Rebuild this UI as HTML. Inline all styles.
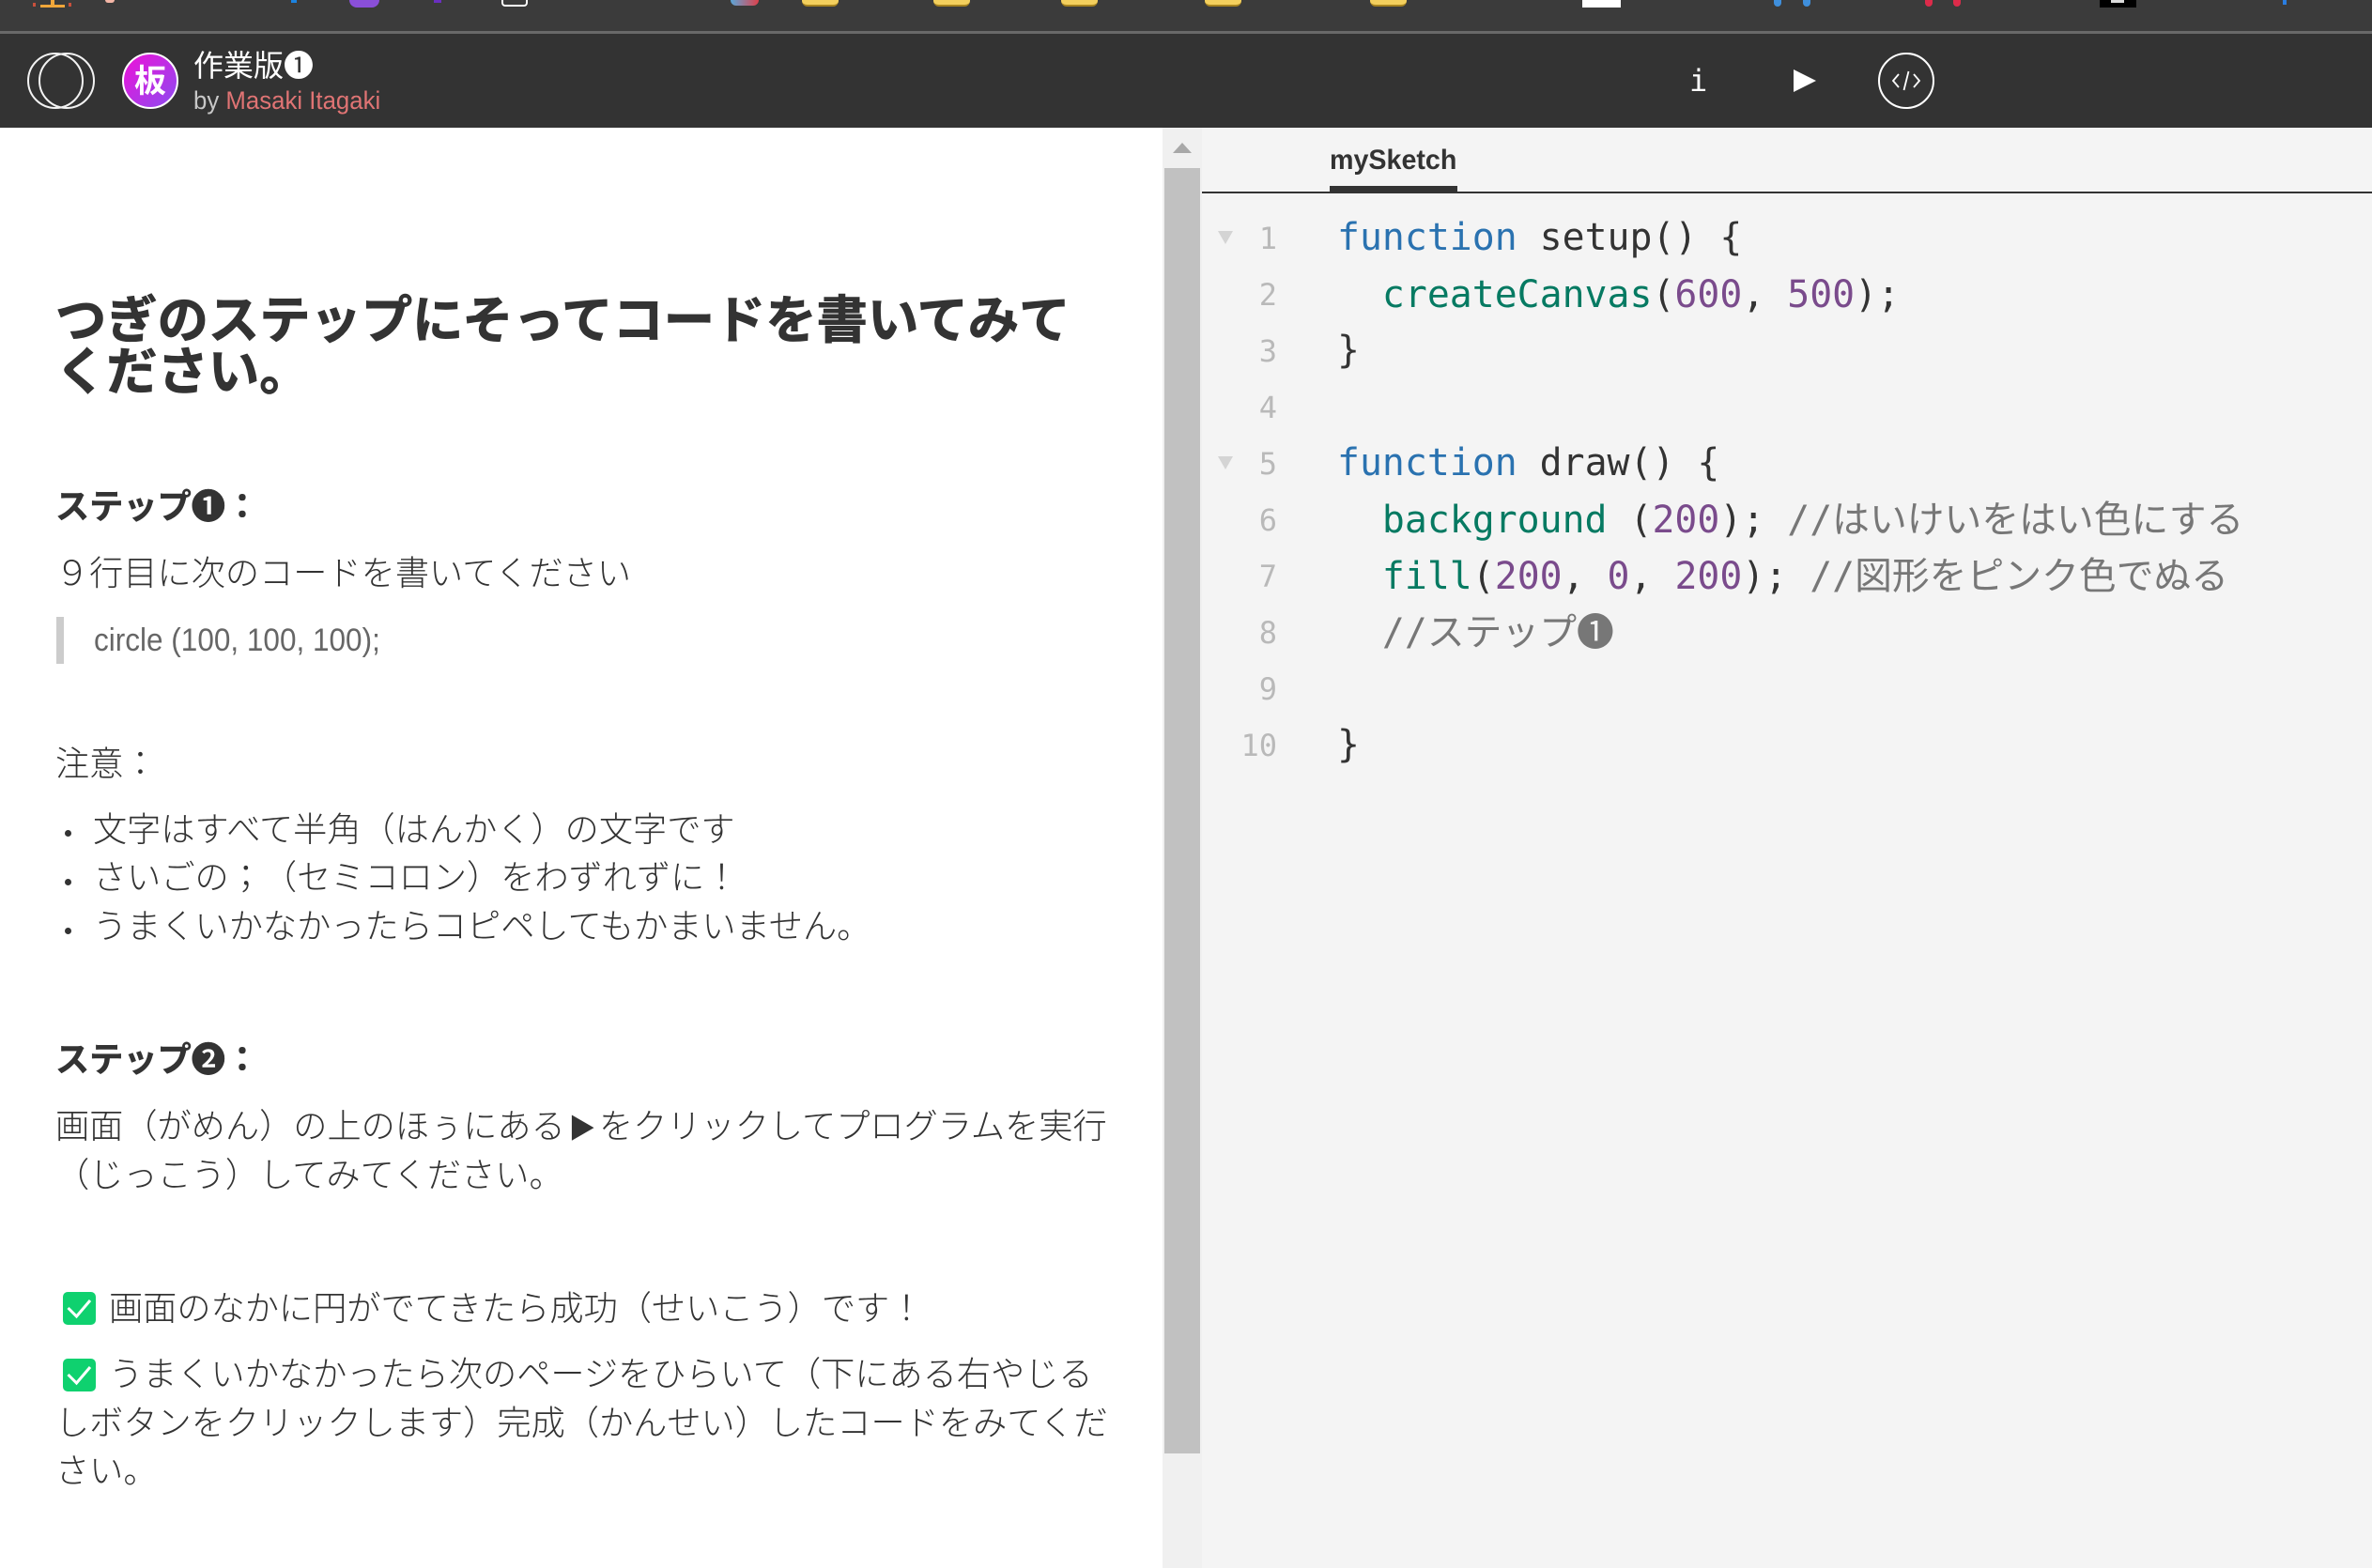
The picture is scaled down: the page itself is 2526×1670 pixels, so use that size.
<!DOCTYPE html>
<html lang="ja"><head><meta charset="utf-8"><title>作業版1</title>
<style>
html,body{margin:0;padding:0;width:2526px;height:1670px;overflow:hidden;background:#fff}
body{position:relative;font-family:"Liberation Sans","Noto Sans CJK JP",sans-serif;color:#333}
.a{position:absolute}
.t{position:absolute;white-space:nowrap;font-size:36.2px;line-height:52px;height:52px;font-family:"Noto Sans CJK JP","Liberation Sans",sans-serif;font-weight:300;left:59px;color:#333;text-spacing-trim:space-all}
.b{font-weight:700;-webkit-text-stroke:.5px #333}
.c{position:absolute;white-space:pre;font-family:"DejaVu Sans Mono","Noto Sans CJK JP",monospace;font-size:39.8px;line-height:60px;height:60px;left:1424px;color:#333}
.n{position:absolute;font-family:"DejaVu Sans Mono",monospace;font-size:32px;line-height:60px;height:60px;left:1260px;width:100px;text-align:right;color:#b9b9b9}
.k{color:#2a72b0}.f{color:#067a62}.d{color:#7a4b8c}.m{color:#777;font-family:"DejaVu Sans Mono","Noto Sans CJK JP",monospace}
.dot{position:absolute;left:69px;width:7px;height:7px;border-radius:50%;background:#333}
</style></head><body>
<div class="a" style="left:0;top:0;width:2526px;height:33px;background:#3b3b3b"></div>
<div class="a" style="left:0;top:33px;width:2526px;height:3px;background:#696969"></div>
<div class="a" style="left:0;top:36px;width:2526px;height:100px;background:#333"></div>

<!-- cut-off toolbar icons -->
<div class="a" style="left:35px;top:3px;width:3px;height:4px;background:#c8503c"></div>
<div class="a" style="left:73px;top:3px;width:3px;height:4px;background:#c8503c"></div>
<div class="a" style="left:43px;top:5px;width:26px;height:3px;background:#f0a63a"></div>
<div class="a" style="left:54px;top:0;width:4px;height:6px;background:#f0a63a"></div>
<div class="a" style="left:112px;top:0;width:10px;height:3px;background:#f4b6a6;border-radius:0 0 5px 5px"></div>
<div class="a" style="left:310px;top:0;width:6px;height:3px;background:#1c83e0"></div>
<div class="a" style="left:372px;top:0;width:32px;height:8px;background:#8a4fd8;border-radius:0 0 16px 16px"></div>
<div class="a" style="left:462px;top:0;width:8px;height:3px;background:#6a2fc0"></div>
<div class="a" style="left:534px;top:0;width:24px;height:5px;border:2px solid #fff;border-top:0;border-radius:0 0 4px 4px"></div>
<div class="a" style="left:778px;top:0;width:30px;height:6px;background:linear-gradient(90deg,#5aa6d8,#e0404a);border-radius:0 0 15px 15px"></div>
<div class="a" style="left:854px;top:0;width:39px;height:7px;background:#f3cf5d;border-bottom:2px solid #a88420;box-sizing:border-box;border-radius:0 0 6px 6px"></div>
<div class="a" style="left:994px;top:0;width:39px;height:7px;background:#f3cf5d;border-bottom:2px solid #a88420;box-sizing:border-box;border-radius:0 0 6px 6px"></div>
<div class="a" style="left:1130px;top:0;width:39px;height:7px;background:#f3cf5d;border-bottom:2px solid #a88420;box-sizing:border-box;border-radius:0 0 6px 6px"></div>
<div class="a" style="left:1283px;top:0;width:39px;height:7px;background:#f3cf5d;border-bottom:2px solid #a88420;box-sizing:border-box;border-radius:0 0 6px 6px"></div>
<div class="a" style="left:1459px;top:0;width:39px;height:7px;background:#f3cf5d;border-bottom:2px solid #a88420;box-sizing:border-box;border-radius:0 0 6px 6px"></div>
<div class="a" style="left:1685px;top:0;width:41px;height:8px;background:#fff"></div>
<div class="a" style="left:1889px;top:0;width:8px;height:7px;background:#3f8fdc;border-radius:0 0 4px 4px"></div>
<div class="a" style="left:1920px;top:0;width:8px;height:7px;background:#3f8fdc;border-radius:0 0 4px 4px"></div>
<div class="a" style="left:2050px;top:0;width:8px;height:7px;background:#dc2b4a;border-radius:0 0 4px 4px"></div>
<div class="a" style="left:2080px;top:0;width:8px;height:7px;background:#dc2b4a;border-radius:0 0 4px 4px"></div>
<div class="a" style="left:2236px;top:0;width:39px;height:8px;background:#000"></div>
<div class="a" style="left:2248px;top:0;width:14px;height:3px;background:#ddd"></div>
<div class="a" style="left:2431px;top:0;width:4px;height:5px;background:#2a7de0"></div>

<!-- header -->
<svg class="a" style="left:26px;top:54px" width="78" height="64" viewBox="0 0 78 64" fill="none" stroke="#f2f2f2" stroke-width="2">
<circle cx="33" cy="32" r="29"/><circle cx="45" cy="32" r="29"/></svg>
<svg class="a" style="left:130px;top:56px" width="60" height="60" viewBox="0 0 60 60">
<defs><linearGradient id="g" x1="0" y1="0" x2="1" y2="1"><stop offset="0" stop-color="#f010d8"/><stop offset="1" stop-color="#8a4cf0"/></linearGradient></defs>
<circle cx="30" cy="30" r="29" fill="url(#g)" stroke="#fff" stroke-width="2"/>
<text x="30" y="42" text-anchor="middle" font-size="34" font-weight="700" fill="#fff" font-family="Noto Sans CJK JP,sans-serif">板</text></svg>
<div class="t" style="left:206px;top:44px;font-size:32px;line-height:48px;height:48px;color:#fff;font-weight:400">作業版❶</div>
<div class="t" style="left:206px;top:85px;font-size:27px;line-height:44px;height:44px;font-family:'Liberation Sans',sans-serif;font-weight:400;color:#c8c8c8;transform:scaleX(.955);transform-origin:0 0">by <span style="color:#e07474">Masaki Itagaki</span></div>

<div class="t" style="left:1799px;top:64px;color:#fff;font-family:'DejaVu Sans Mono',monospace;font-size:32px;line-height:44px;height:44px;font-weight:400">i</div>
<svg class="a" style="left:1908px;top:72px" width="28" height="28"><path d="M2 2 L26 14 L2 26Z" fill="#fff"/></svg>
<svg class="a" style="left:1998px;top:54px" width="64" height="64" viewBox="0 0 64 64" fill="none" stroke="#fff">
<circle cx="32" cy="32" r="29" stroke-width="2"/>
<path d="M24 25 L18 32 L24 39M40 25 L46 32 L40 39M34.500 22 L29.500 42" stroke-width="1.800"/></svg>

<!-- left pane -->
<div class="t b" style="top:310px;font-size:54.3px;line-height:54px;height:54px;font-weight:700;-webkit-text-stroke:.9px #333">つぎのステップにそってコードを書いてみて</div>
<div class="t b" style="top:365px;font-size:54.3px;line-height:54px;height:54px;font-weight:700;-webkit-text-stroke:.9px #333">ください。</div>
<div class="t b" style="top:511px">ステップ❶：</div>
<div class="t" style="top:582px">９行目に次のコードを書いてください</div>
<div class="a" style="left:60px;top:657px;width:8px;height:50px;background:#ccc"></div>
<div class="t" style="left:100px;top:656px;font-size:34px;color:#666;font-family:'Liberation Sans',sans-serif;font-weight:400;transform:scaleX(.927);transform-origin:0 0">circle (100, 100, 100);</div>
<div class="t" style="top:785px">注意：</div>
<div class="dot" style="top:884px"></div>
<div class="t" style="left:99px;top:855px">文字はすべて半角（はんかく）の文字です</div>
<div class="dot" style="top:936px"></div>
<div class="t" style="left:99px;top:906px">さいごの；（セミコロン）をわずれずに！</div>
<div class="dot" style="top:988px"></div>
<div class="t" style="left:99px;top:958px">うまくいかなかったらコピペしてもかまいません。</div>
<div class="t b" style="top:1100px">ステップ❷：</div>
<div class="t" style="top:1171px">画面（がめん）の上のほぅにある<span style="display:inline-block;width:36.2px;font-size:29px;text-align:center">▶</span>をクリックしてプログラムを実行</div>
<div class="t" style="top:1223px">（じっこう）してみてください。</div>

<svg class="a" style="left:67px;top:1376px" width="35" height="35" viewBox="0 0 35 35"><rect width="35" height="35" rx="5" fill="#0fd16f"/><path d="M5.500 17 L14.500 26 L29 9" fill="none" stroke="#fff" stroke-width="3"/></svg>
<div class="t" style="left:116px;top:1365px">画面のなかに円がでてきたら成功（せいこう）です！</div>
<svg class="a" style="left:67px;top:1447px" width="35" height="35" viewBox="0 0 35 35"><rect width="35" height="35" rx="5" fill="#0fd16f"/><path d="M5.500 17 L14.500 26 L29 9" fill="none" stroke="#fff" stroke-width="3"/></svg>
<div class="t" style="left:116px;top:1435px">うまくいかなかったら次のページをひらいて（下にある右やじる</div>
<div class="t" style="top:1487px">しボタンをクリックします）完成（かんせい）したコードをみてくだ</div>
<div class="t" style="top:1538px">さい。</div>

<!-- scrollbar -->
<div class="a" style="left:1238px;top:136px;width:42px;height:1534px;background:#f0f0f0"></div>
<div class="a" style="left:1240px;top:179px;width:38px;height:1369px;background:#c1c1c1"></div>
<svg class="a" style="left:1249px;top:152px" width="20" height="12"><path d="M10 0 L20 11 L0 11Z" fill="#a8a8a8"/></svg>

<!-- editor -->
<div class="a" style="left:1280px;top:136px;width:1246px;height:1534px;background:#f4f4f4"></div>
<div class="t" style="left:1416px;top:147px;font-size:30px;line-height:48px;height:48px;font-family:'Liberation Sans',sans-serif;font-weight:700;color:#333;transform:scaleX(.955);transform-origin:0 0">mySketch</div>
<div class="a" style="left:1416px;top:198px;width:136px;height:6px;background:#333"></div>
<div class="a" style="left:1280px;top:204px;width:1246px;height:2px;background:#333"></div>

<svg class="a" style="left:1297px;top:246px" width="16" height="14"><path d="M0 0 H16 L8 14Z" fill="#d4d4d4"/></svg>
<svg class="a" style="left:1297px;top:486px" width="16" height="14"><path d="M0 0 H16 L8 14Z" fill="#d4d4d4"/></svg>

<div class="n" style="top:224px">1</div><div class="n" style="top:284px">2</div><div class="n" style="top:344px">3</div><div class="n" style="top:404px">4</div><div class="n" style="top:464px">5</div><div class="n" style="top:524px">6</div><div class="n" style="top:584px">7</div><div class="n" style="top:644px">8</div><div class="n" style="top:704px">9</div><div class="n" style="top:764px">10</div>

<div class="c" style="top:223px"><span class="k">function</span> setup() {</div>
<div class="c" style="top:284px">  <span class="f">createCanvas</span>(<span class="d">600</span>, <span class="d">500</span>);</div>
<div class="c" style="top:343px">}</div>
<div class="c" style="top:463px"><span class="k">function</span> draw() {</div>
<div class="c" style="top:524px">  <span class="f">background</span> (<span class="d">200</span>); <span class="m">//はいけいをはい色にする</span></div>
<div class="c" style="top:584px">  <span class="f">fill</span>(<span class="d">200</span>, <span class="d">0</span>, <span class="d">200</span>); <span class="m">//図形をピンク色でぬる</span></div>
<div class="c" style="top:644px">  <span class="m">//ステップ❶</span></div>
<div class="c" style="top:763px">}</div>
</body></html>
